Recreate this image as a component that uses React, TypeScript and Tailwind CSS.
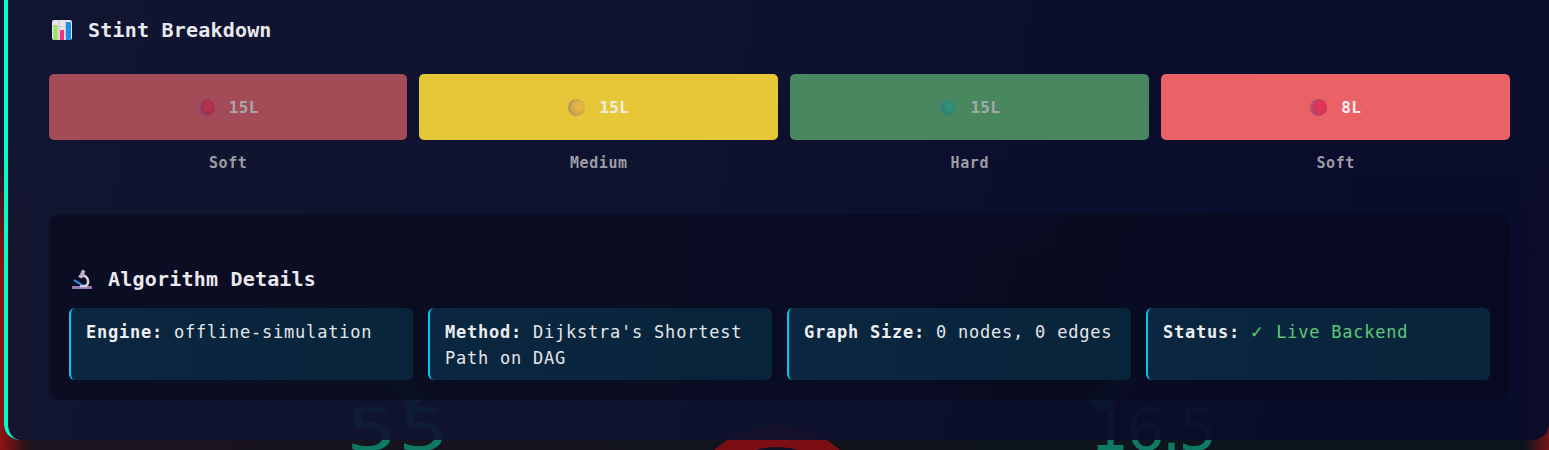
import React from 'react';

const mono = "font-['DejaVu_Sans_Mono','Liberation_Mono',monospace]";

const stints = [
  {
    label: 'Soft',
    laps: '15L',
    bar: 'bg-[#a34c57]',
    ball: 'bg-[radial-gradient(circle_at_62%_42%,#b8354f,#8e2a4c)]',
    text: 'text-[#aaa3ad]',
  },
  {
    label: 'Medium',
    laps: '15L',
    bar: 'bg-[#e6c738]',
    ball: 'bg-[radial-gradient(circle_at_62%_42%,#e8bd40,#c2954a)]',
    text: 'text-[#f2efe0]',
  },
  {
    label: 'Hard',
    laps: '15L',
    bar: 'bg-[#49875f]',
    ball: 'bg-[radial-gradient(circle_at_62%_42%,#2f9a76,#2f6f68)]',
    text: 'text-[#a3aaa8]',
  },
  {
    label: 'Soft',
    laps: '8L',
    bar: 'bg-[#ea6166]',
    ball: 'bg-[radial-gradient(circle_at_62%_42%,#e6345c,#b83a5c)]',
    text: 'text-[#f6eef0]',
  },
];

const ChartIcon = () => (
  <svg width="20" height="20" viewBox="0 0 20 20" className="shrink-0">
    <rect x="0" y="0" width="20" height="20" rx="2" fill="#e6e3ea" />
    <path d="M0 6.5h20M0 13h20M7 0v20M13.500 0v20" stroke="#c9c4d0" strokeWidth="0.8" />
    <rect x="1.500" y="5" width="4" height="15" fill="#9be25f" />
    <rect x="8" y="10" width="4" height="10" fill="#f0347c" />
    <rect x="14" y="2" width="5" height="18" fill="#1f8fe8" />
  </svg>
);

const MicroscopeIcon = () => (
  <svg width="20" height="20" viewBox="0 0 20 20" className="shrink-0">
    <rect x="0" y="17" width="20" height="3" rx="1" fill="#9a7ab8" />
    <path d="M11 6.500a6 6 0 0 1 3 10.500h-6" fill="none" stroke="#d4cfd9" strokeWidth="2.400" />
    <path d="M10 .500l3.500 1.500-2.500 6-3.500-1.500z" fill="#b5afbb" />
    <path d="M7 6l4 1.800-1 1.700-3.500-1.500z" fill="#e0b8ec" />
    <path d="M2 11l8 5" stroke="#2f9af0" strokeWidth="2" />
  </svg>
);

const Heading = ({ icon, title }: { icon: React.ReactNode; title: string }) => (
  <h2 className="flex h-[30px] items-center gap-4 pl-[3px]">
    {icon}
    <span className="text-[20px] font-bold tracking-[0.2px] text-[#e8e8ee]">{title}</span>
  </h2>
);

const DetailCard = ({ label, children }: { label: string; children: React.ReactNode }) => (
  <div className="h-[72px] rounded-md border-l-2 border-[#00c8f5] bg-[linear-gradient(90deg,rgba(11,40,66,0.94),rgba(8,38,60,0.94))] pl-[15px] pr-3 pt-[11px] text-[17px] leading-[26px] tracking-[0.77px] text-[#e4e6ea]">
    <strong className="font-bold text-[#eceef2]">{label}</strong> {children}
  </div>
);

export default function App() {
  return (
    <div className={`relative h-[450px] w-[1549px] overflow-hidden ${mono}`}>
      {/* page behind the panel */}
      <div className="absolute inset-0 bg-[linear-gradient(180deg,#11142f_0,#11142f_150px,transparent_260px),linear-gradient(90deg,#8f1212_0,#1c141e_30px,#14141f_500px,#0e141c_1000px,#0e141c_1525px,#7a1418_1549px)]">
        <div className="absolute left-[686px] top-[425px] h-[182px] w-[182px] rounded-full border-[22px] border-[#7a0e12] bg-[#0c1226]" />
        <div className="absolute left-[346px] top-[401px] origin-left scale-x-[1.4] font-['DejaVu_Sans',sans-serif] text-[58px] leading-[58px] text-[#0e7a66]">
          55
        </div>
        <div className="absolute left-[1090px] top-[401px] origin-left scale-x-[1.06] font-['DejaVu_Sans',sans-serif] text-[58px] leading-[58px] tracking-[-3px] text-[#0e7a66]">
          16.5
        </div>
        <div className="absolute left-[366px] top-[370px] h-[20px] w-[62px] rotate-45 bg-[#0e7a66]" />
        <div className="absolute left-[1088px] top-[380px] h-[20px] w-[50px] -rotate-45 bg-[#0e7a66]" />
      </div>

      <div className="relative ml-1 rounded-b-2xl border-l-4 border-[#00ffc8] bg-[linear-gradient(100deg,rgba(17,21,48,0.92),rgba(14,19,48,0.92)_40%,rgba(9,12,43,0.94)_85%)] pb-10 pl-[41px] pr-[39px] pt-[15px]">
        <div className="mb-[29px]">
          <Heading icon={<ChartIcon />} title="Stint Breakdown" />
        </div>

        <div className="grid grid-cols-[358.4px_358.9px_359px_1fr] gap-3">
          {stints.map((s, i) => (
            <div key={i}>
              <div className={`flex h-[66px] items-center justify-center gap-[14px] rounded-[5px] ${s.bar}`}>
                <span
                  className={`h-[17px] w-[17px] rounded-full shadow-[inset_2px_0_2px_rgba(130,130,150,0.45)] ${s.ball}`}
                />
                <span className={`mt-[2px] text-base font-bold tracking-[0.3px] ${s.text}`}>{s.laps}</span>
              </div>
              <div className="mt-3 h-[22px] text-center text-[15px] font-bold leading-[22px] tracking-[0.6px] text-[#9c9ca6]">
                {s.label}
              </div>
            </div>
          ))}
        </div>

        <div className="mt-10 rounded-xl bg-[rgba(8,10,28,0.62)] px-5 pb-5 pt-[50px]">
          <div className="mb-[14px]">
            <Heading icon={<MicroscopeIcon />} title="Algorithm Details" />
          </div>
          <div className="grid grid-cols-4 gap-[15px]">
            <DetailCard label="Engine:">offline-simulation</DetailCard>
            <DetailCard label="Method:">Dijkstra's Shortest Path on DAG</DetailCard>
            <DetailCard label="Graph Size:">0 nodes, 0 edges</DetailCard>
            <DetailCard label="Status:">
              <span className="text-[#5fc878]">
                <span className="mr-[2px] text-[19px] leading-none">✓</span> Live Backend
              </span>
            </DetailCard>
          </div>
        </div>
      </div>
    </div>
  );
}
